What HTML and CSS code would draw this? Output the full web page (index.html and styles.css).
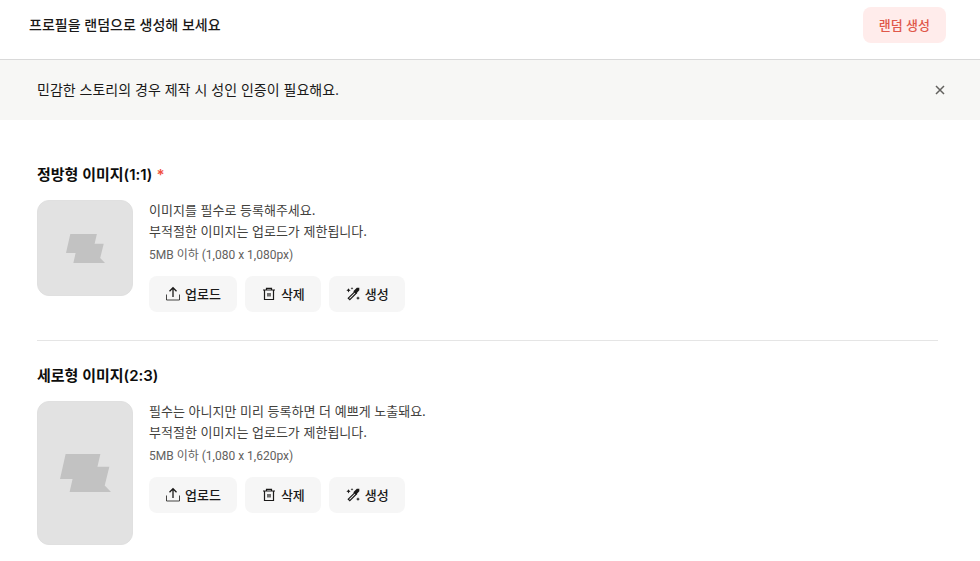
FILE: index.html
```html
<!DOCTYPE html>
<html lang="ko">
<head>
  <meta charset="UTF-8">
  <meta name="viewport" content="width=device-width, initial-scale=1.0">
  <title>프로필 이미지</title>
  <link rel="stylesheet" href="styles.css">
</head>
<body>
  <!-- 아이콘 모음 -->
  <svg class="sprite" aria-hidden="true">
    <symbol id="icon-upload" viewBox="0 0 16 16">
      <path d="M1.500 8.500v5.500h13V8.500" fill="none" stroke="currentColor" stroke-opacity=".8"/>
      <path d="M8 11V2M4.500 5.200L8 1.700l3.500 3.500" fill="none" stroke="currentColor" stroke-width="1.300"/>
    </symbol>
    <symbol id="icon-trash" viewBox="0 0 16 16">
      <path d="M2 4h12M5.500 4V2.300h5V4M3.500 4v9.500h9V4M7 7v3.500M9 7v3.500" fill="none" stroke="currentColor" stroke-width="1.200"/>
    </symbol>
    <symbol id="icon-wand" viewBox="0 0 16 16">
      <path d="M3.300 12.200L10 5.500 11.500 7 4.800 13.700z" fill="none" stroke="currentColor" stroke-width="1.200"/>
      <path d="M8.300 5.200L11.800 1.700h2.500v2.500L10.800 8z" fill="currentColor"/>
      <path d="M3.500 2.200l.7 1.400 1.400.7-1.400.7-.7 1.400-.7-1.400-1.400-.7 1.400-.7zM7 1l.4 1 1 .4-1 .4-.4 1-.4-1-1-.4 1-.4zM13 10.200l.6 1.300 1.300.6-1.300.6-.6 1.300-.6-1.300-1.300-.6 1.300-.6z" fill="currentColor"/>
    </symbol>
    <symbol id="icon-close" viewBox="0 0 16 16">
      <path d="M4 4l8 8M12 4l-8 8" fill="none" stroke="currentColor" stroke-width="1.500"/>
    </symbol>
    <symbol id="placeholder" viewBox="0 0 154 114">
      <path d="M17 0h105l-9 38h36l-14 57 19 19H29l9-39H0z" fill="currentColor"/>
    </symbol>
  </svg>

  <header class="random-bar">
    <p class="random-title">프로필을 랜덤으로 생성해 보세요</p>
    <button type="button" class="btn btn-random">랜덤 생성</button>
  </header>

  <div class="notice">
    <p>민감한 스토리의 경우 제작 시 성인 인증이 필요해요.</p>
    <button type="button" class="btn-close" aria-label="닫기"><svg class="icon"><use href="#icon-close"/></svg></button>
  </div>

  <main class="content">
    <!-- 정방형 -->
    <section class="image-section">
      <h2>정방형 이미지(1:1)<span class="required">*</span></h2>
      <div class="image-row">
        <div class="preview square"><svg class="mark"><use href="#placeholder"/></svg></div>
        <div class="info">
          <p class="desc">이미지를 필수로 등록해주세요.<br>부적절한 이미지는 업로드가 제한됩니다.</p>
          <p class="size">5MB 이하 (1,080 x 1,080px)</p>
          <div class="buttons">
            <button type="button" class="btn"><svg class="icon"><use href="#icon-upload"/></svg>업로드</button>
            <button type="button" class="btn"><svg class="icon"><use href="#icon-trash"/></svg>삭제</button>
            <button type="button" class="btn"><svg class="icon"><use href="#icon-wand"/></svg>생성</button>
          </div>
        </div>
      </div>
    </section>

    <!-- 세로형 -->
    <section class="image-section">
      <h2>세로형 이미지(2:3)</h2>
      <div class="image-row">
        <div class="preview portrait"><svg class="mark"><use href="#placeholder"/></svg></div>
        <div class="info">
          <p class="desc">필수는 아니지만 미리 등록하면 더 예쁘게 노출돼요.<br>부적절한 이미지는 업로드가 제한됩니다.</p>
          <p class="size">5MB 이하 (1,080 x 1,620px)</p>
          <div class="buttons">
            <button type="button" class="btn"><svg class="icon"><use href="#icon-upload"/></svg>업로드</button>
            <button type="button" class="btn"><svg class="icon"><use href="#icon-trash"/></svg>삭제</button>
            <button type="button" class="btn"><svg class="icon"><use href="#icon-wand"/></svg>생성</button>
          </div>
        </div>
      </div>
    </section>
  </main>
</body>
</html>
```
FILE: styles.css
```css
* {
  box-sizing: border-box;
}
body {
  margin: 0;
  background: #fff;
  color: #1a1918;
  font-family: Inter, "Noto Sans CJK KR", sans-serif;
  font-size: 14px;
  line-height: 20px;
}
p, h2 {
  margin: 0;
}
.sprite {
  display: none;
}
.icon {
  width: 16px;
  height: 16px;
  flex-shrink: 0;
}
.random-bar {
  display: flex;
  align-items: center;
  justify-content: space-between;
  padding: 7px 34px 16px 29px;
  border-bottom: 1px solid #d9d9d9;
}
.random-title {
  font-weight: 500;
}
.btn {
  display: flex;
  align-items: center;
  gap: 4px;
  height: 36px;
  padding: 0 16px;
  border: none;
  border-radius: 8px;
  background: #f6f6f6;
  color: #1a1918;
  font-family: inherit;
  font-size: 13px;
  font-weight: 500;
  line-height: 20px;
  cursor: pointer;
}
.btn-random {
  background: #ffeceb;
  color: #e0584a;
}
.notice {
  display: flex;
  align-items: center;
  justify-content: space-between;
  padding: 20px 32px 20px 37px;
  background: #f7f7f5;
}
.btn-close {
  display: flex;
  padding: 0;
  border: none;
  background: none;
  color: #62615e;
  cursor: pointer;
}
.content {
  padding: 20px 42px 0 37px;
}
.image-section {
  padding: 24px 0 28px;
}
.image-section:not(:last-child) {
  border-bottom: 1px solid #e5e5e5;
}
h2 {
  margin-bottom: 14px;
  color: #0d0d0c;
  font-size: 15px;
  font-weight: 600;
  line-height: 22px;
}
.required {
  margin-left: 4px;
  color: #f0503c;
}
.image-row {
  display: flex;
  align-items: flex-start;
  gap: 16px;
}
.preview {
  display: flex;
  align-items: center;
  justify-content: center;
  flex-shrink: 0;
  width: 96px;
  border: 1px solid #e0e0e0;
  border-radius: 12px;
  background: #e2e2e2;
  color: #c2c2c2;
}
.square {
  aspect-ratio: 1 / 1;
}
.portrait {
  aspect-ratio: 2 / 3;
}
.square .mark {
  width: 39px;
  height: 29px;
}
.portrait .mark {
  width: 51px;
  height: 38px;
}
.desc {
  color: #42413d;
  font-size: 13px;
  line-height: 21px;
}
.size {
  margin: 4px 0 12px;
  color: #62615e;
  font-family: Roboto, "Noto Sans CJK KR", sans-serif;
  font-size: 12px;
  line-height: 18px;
}
.buttons {
  display: flex;
  gap: 8px;
}
```
